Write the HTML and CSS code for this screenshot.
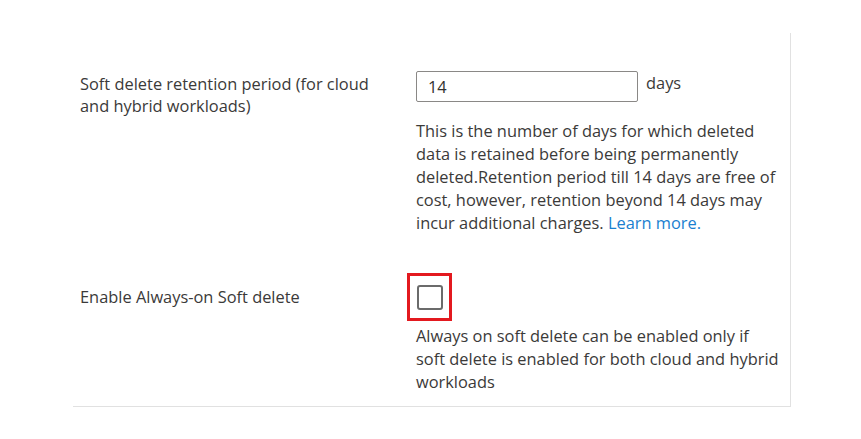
FILE: index.html
```html
<!DOCTYPE html>
<html>
<head>
<meta charset="utf-8">
<link rel="stylesheet" href="styles.css">
</head>
<body>
<div class="panel">
  <div class="row row-retention">
    <div class="label">Soft delete retention period (for cloud and hybrid workloads)</div>
    <div class="control">
      <div class="input-line">
        <div class="input">14</div>
        <span class="unit">days</span>
      </div>
      <p class="desc">This is the number of days for which deleted data is retained before being permanently deleted.Retention period till 14 days are free of cost, however, retention beyond 14 days may incur additional charges. <a class="link" href="#">Learn more.</a></p>
    </div>
  </div>
  <div class="row row-always">
    <div class="label label-always">Enable Always-on Soft delete</div>
    <div class="control">
      <div class="highlight"><span class="checkbox"></span></div>
      <p class="desc desc-always">Always on soft delete can be enabled only if soft delete is enabled for both cloud and hybrid workloads</p>
    </div>
  </div>
</div>
</body>
</html>
```
FILE: styles.css
```css
html, body {
  margin: 0;
  padding: 0;
  background: #ffffff;
}
body {
  font-family: "Segoe UI", "Open Sans", "Noto Sans", sans-serif;
  color: #3b3a39;
  font-size: 16.4px;
}
.panel {
  margin: 33px 0 0 73px;
  width: 718px;
  border-right: 1px solid #e1e1e1;
  border-bottom: 1px solid #e1e1e1;
  padding: 38px 0 13px 7px;
  box-sizing: border-box;
}
.row {
  display: grid;
  grid-template-columns: 336px 1fr;
}
.label {
  line-height: 22px;
  padding-top: 2px;
  width: 310px;
}
.input-line {
  display: flex;
  align-items: flex-start;
  gap: 8px;
}
.input {
  width: 222px;
  height: 31px;
  box-sizing: border-box;
  border: 1px solid #8a8886;
  border-radius: 2px;
  padding: 0 11px;
  line-height: 30px;
  color: #323130;
}
.unit {
  line-height: 22px;
  margin-top: 1px;
}
.desc {
  margin: 0;
  line-height: 23px;
  width: 372px;
}
.row-retention .desc {
  margin-top: 17px;
}
.link {
  color: #1a7fd0;
  text-decoration: none;
}
.row-always {
  margin-top: 39px;
}
.label-always {
  padding-top: 13px;
}
.highlight {
  width: 45px;
  height: 48px;
  box-sizing: border-box;
  border: 3px solid #e3191f;
  margin-left: -9px;
  display: flex;
  align-items: center;
  justify-content: center;
}
.checkbox {
  width: 26px;
  height: 25px;
  box-sizing: border-box;
  border: 2px solid #6b6b6b;
  border-radius: 3px;
  background: #ffffff;
}
.row-always .desc-always {
  margin-top: 3px;
  width: 364px;
}
```
